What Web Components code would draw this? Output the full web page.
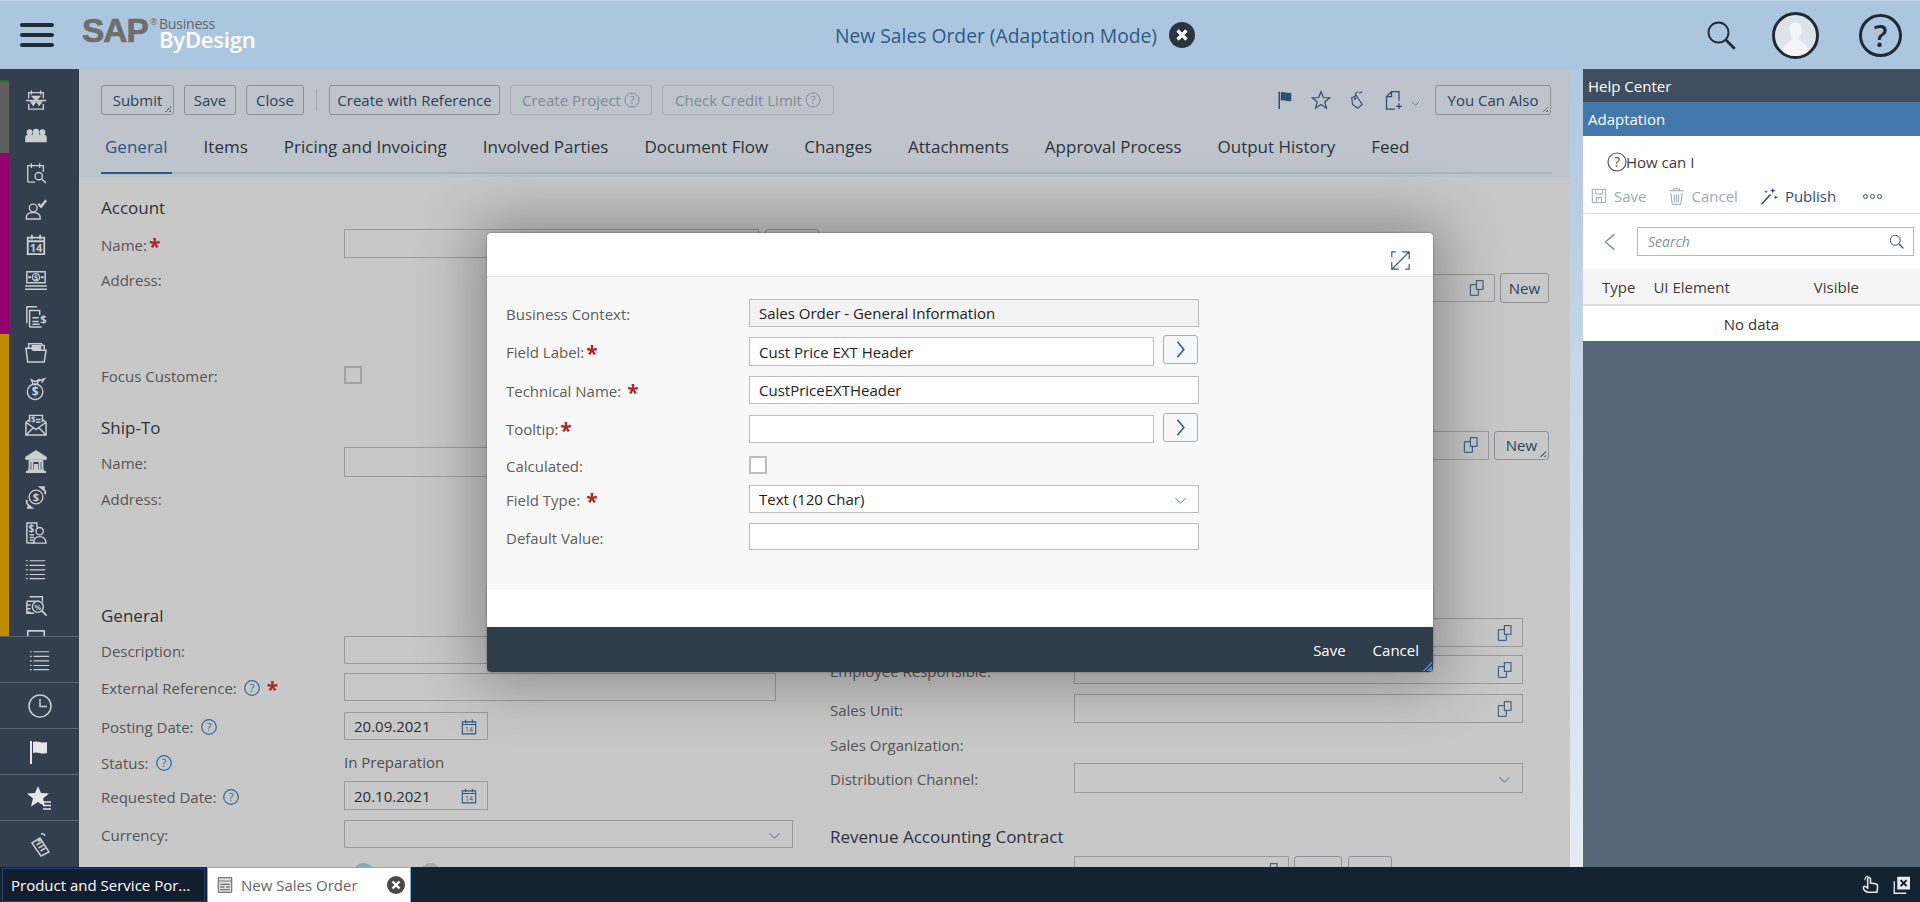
<!DOCTYPE html>
<html lang="en">
<head>
<meta charset="utf-8">
<title>New Sales Order</title>
<style>
  html, body { margin: 0; padding: 0; height: 100%; overflow: hidden; background: #c8c8c8; }
  body { font-family: "Open Sans", "Liberation Sans", sans-serif; }
</style>
</head>
<body>
<sap-shell>
  <app-header slot="header"></app-header>
  <side-nav slot="nav"></side-nav>
  <div slot="main">
    <page-toolbar></page-toolbar>
    <form-area>
      <form-col slot="left">
        <form-heading gap="19">Account</form-heading>
        <form-row gap="9" h="29" label="Name:" req><f-input w="415" h="29"></f-input><tool-btn w="54" h="29" style="margin-left:6px"></tool-btn></form-row>
        <form-row gap="6" h="30" label="Address:"></form-row>
        <form-row gap="66" h="29" label="Focus Customer:"><f-check></f-check></form-row>
        <form-heading gap="27">Ship-To</form-heading>
        <form-row gap="7" h="30" label="Name:"><f-input w="415" h="30"></f-input></form-row>
        <form-row gap="6" h="30" label="Address:"></form-row>
        <form-heading gap="91">General</form-heading>
        <form-row gap="8" h="28" label="Description:"><f-input w="432" h="28"></f-input></form-row>
        <form-row gap="9" h="28" label="External Reference:" help req><f-input w="432" h="28"></f-input></form-row>
        <form-row gap="11" h="28" label="Posting Date:" help><f-input w="144" h="28" value="20.09.2021" icon="cal"></f-input></form-row>
        <form-row gap="7" h="29" label="Status:" help><span style="color:#4d4d4d">In Preparation</span></form-row>
        <form-row gap="5" h="29" label="Requested Date:" help><f-input w="144" h="29" value="20.10.2021" icon="cal"></f-input></form-row>
        <form-row gap="10" h="28" label="Currency:"><f-input w="449" h="28" icon="chev"></f-input></form-row>
        <form-row gap="15" h="20" label=""><radio-dots></radio-dots></form-row>
      </form-col>
      <form-col slot="right">
        <form-row gap="96" h="30" label=""><f-input w="421" h="28" icon="copy"></f-input><tool-btn w="49" h="30" style="margin-left:5px">New</tool-btn></form-row>
        <form-row gap="127" h="30" label=""><f-input w="415" h="29" icon="copy"></f-input><tool-btn w="55" h="29" corner style="margin-left:5px">New</tool-btn></form-row>
        <form-row gap="158" h="29" label=""><f-input w="449" h="29" icon="copy"></f-input></form-row>
        <form-row gap="8" h="29" label="Employee Responsible:"><f-input w="449" h="29" icon="copy"></f-input></form-row>
        <form-row gap="10" h="29" label="Sales Unit:"><f-input w="449" h="29" icon="copy"></f-input></form-row>
        <form-row gap="7" h="28" label="Sales Organization:"></form-row>
        <form-row gap="5" h="30" label="Distribution Channel:"><f-input w="449" h="30" icon="chev"></f-input></form-row>
        <form-heading gap="32">Revenue Accounting Contract</form-heading>
        <form-row gap="7" h="30" label=""><f-input w="215" h="30" icon="copy"></f-input><tool-btn w="48" h="30" style="margin-left:5px"></tool-btn><tool-btn w="44" h="30" style="margin-left:6px"></tool-btn></form-row>
      </form-col>
    </form-area>
  </div>
  <div slot="gutter"></div>
  <help-panel slot="panel"></help-panel>
  <task-bar slot="taskbar"></task-bar>
  <adapt-dialog slot="overlay">
    <form-row gap="22" h="28" label="Business Context:"><f-input w="450" h="28" value="Sales Order - General Information" readonly></f-input></form-row>
    <form-row gap="8" h="31" label="Field Label:" req><f-input w="405" h="29" value="Cust Price EXT Header" style="align-self:flex-end"></f-input><arrow-btn></arrow-btn></form-row>
    <form-row gap="10" h="28" label="Technical Name:" req sp><f-input w="450" h="28" value="CustPriceEXTHeader"></f-input></form-row>
    <form-row gap="9" h="30" label="Tooltip:" req><f-input w="405" h="28" style="align-self:flex-end"></f-input><arrow-btn></arrow-btn></form-row>
    <form-row gap="8" h="28" label="Calculated:"><f-check></f-check></form-row>
    <form-row gap="6" h="28" label="Field Type:" req sp><f-input w="450" h="28" value="Text (120 Char)" icon="chev"></f-input></form-row>
    <form-row gap="10" h="27" label="Default Value:"><f-input w="450" h="27"></f-input></form-row>
  </adapt-dialog>
</sap-shell>

<script>
const ICONS = {
  menuCal: `<path d="M4 10V4h16v6M7 1.500v4.500M17 1.500v4.500M4 16v6h16v-6M1 12.500h22"/><path class="f" d="M6.500 14h5l-2.500 3.500zM13 14h5l-2.500 3.500z"/><path class="f" d="M8 8h8l-4 4z"/>`,
  team: `<g class="f"><circle cx="5" cy="8" r="2.500"/><circle cx="12" cy="7.500" r="2.700"/><circle cx="19" cy="8" r="2.500"/><path d="M1 18v-4.500q0-2.500 3.500-2.500 1.700 0 2.700.8V18zM8 18v-5.500q0-2.500 4-2.500t4 2.500V18zM17 18v-6.200q1-.8 2.500-.8 3.500 0 3.500 2.500V18z"/></g>`,
  calSearch: `<path d="M3 23V5h17v7M3 23h8M7 2.500v5M16 2.500v5"/><circle cx="15" cy="16.500" r="4"/><path d="M18 19.500l5 4.500"/>`,
  personCheck: `<circle cx="9" cy="12" r="4.200"/><path d="M1.500 24v-2q0-5 7.500-5t7.500 5v2z"/><path stroke-width="2.600" d="M14.500 7.500l3 3 5.500-7"/>`,
  cal14: `<path stroke-width="2" d="M3 5h18v18H3zM3 9h18M7.500 2v5M16.500 2v5"/><text x="12" y="21" text-anchor="middle" class="t" font-size="12" font-weight="700">14</text>`,
  money: `<path stroke-width="1.600" d="M2 3h20v12H2zM0 18.500h24M0 22h24"/><circle cx="12" cy="9" r="4"/><path stroke-width="2.400" d="M3.500 9h3M17.500 9h3"/><text x="12" y="12" text-anchor="middle" class="t" font-size="8" font-weight="700">$</text>`,
  docDollar: `<path stroke-width="1.600" d="M2 20V2h11M5 24V6h11v5M5 24h13M8 14h7M8 18h7M8 21h8"/><text x="20" y="20" text-anchor="middle" class="t" font-size="12" font-weight="700">$</text>`,
  folderMoney: `<path stroke-width="1.600" d="M4 9V3h14l1 2 2 0v5M1 8h6l2 2h14l-2 13H3z"/><path class="f" d="M8 5h9v4H8z"/>`,
  moneyBag: `<circle cx="11" cy="15" r="8.500"/><path stroke-width="1.600" d="M7 2l4 2 4-2-2 5H9zM15 3l6-2-3 4"/><text x="11" y="20" text-anchor="middle" class="t" font-size="13" font-weight="700">$</text>`,
  envelope: `<path stroke-width="1.600" d="M5 9V1.500h14V9M1 9l4-3M23 9l-4-3M1 9v14h22V9M1 9l11 8 11-8M1 23l8-8M23 23l-8-8"/><text x="9" y="10" text-anchor="middle" class="t" font-size="9" font-weight="700">$</text><path d="M12 6h5M12 9h5"/>`,
  bank: `<path class="f" d="M12 1L1 8v2h22V8z"/><path stroke-width="2" d="M3 22h18M1 24h22M4 12h16"/><path stroke-width="2.200" d="M5 13v8M8 13v8M16 13v8M19 13v8"/><path class="f" d="M10.500 16h3v5h-3z"/>`,
  coinArrows: `<circle cx="12" cy="12" r="7.500"/><text x="12" y="16.500" text-anchor="middle" class="t" font-size="12" font-weight="700">$</text><path stroke-width="2" d="M2 15q-1 5 4 8M22 9q1-5-4-7"/><path class="f" d="M4 21l4 3-5 0zM20 4l-4-3 5 0z"/>`,
  personDollar: `<path stroke-width="1.600" d="M2 23V1h11v5M2 23h9M5 14h5M5 17h5M5 20h4"/><text x="7" y="11" text-anchor="middle" class="t" font-size="11" font-weight="700">$</text><circle cx="16" cy="10" r="4"/><path d="M9.500 23q0-7 6.500-7t7 7z"/>`,
  list: `<path stroke-width="1.300" d="M5 3h17M5 8h17M5 13h17M5 18h17M5 22.500h17"/><path stroke-width="1.300" d="M1 3h2M1 8h2M1 13h2M1 18h2M1 22.500h2"/>`,
  coinSearch: `<path stroke-width="1.600" d="M2 8h14M2 8v13h8M5 3h14v6M2 12h4M2 16h4M2 20h4"/><circle cx="14" cy="14" r="6"/><path stroke-width="2" d="M18.500 18.500l5 5"/><text x="14" y="17" text-anchor="middle" class="t" font-size="8" font-weight="700">%</text>`,
  docClip: `<path stroke-width="1.800" d="M3 24V1h18v23M7 8h10"/>`,
  clock: `<circle cx="12" cy="12" r="11"/><path d="M12 5v7.500h7"/>`,
  flag: `<path class="f" stroke="none" d="M5 2c5-2 8 2 14 0v11c-6 2-9-2-14 0z"/><path stroke-width="2" d="M3 1v23"/>`,
  starList: `<path class="f" stroke="none" d="M10 0l3 7 8 .5-6 5 2 8-7-4.500-7 4.500 2-8-6-5 8-.5z"/><path d="M15 16h8M15 19.500h8M15 23h8"/>`,
  tag: `<path d="M4 11l8-5 9 14-8 4zM17 4q-1-3-4-2"/><circle cx="11" cy="8" r="1"/><path d="M8.500 13l5-3M10.500 16l5-3M12.500 19l5-3"/>`,
  star: `<path d="M12 2l2.800 7 7.700.4-6 4.900 2 7.500-6.500-4.300-6.500 4.300 2-7.500-6-4.900 7.700-.4z"/>`,
  tagOutline: `<path d="M5 9l6-3 8 12-6 5-7-5zM10 7Q9 2 14 1M15 3l4-2"/><circle cx="9.500" cy="10" r="1"/>`,
  docPlus: `<path d="M3 8l6-6h9v11M9 2v6H3v15h10M18 16v7M14.500 19.500h7"/>`,
  copy: `<rect x="11" y="1" width="10" height="13"/><path d="M11 7H2v16h12v-9"/>`,
  chevDown: `<path d="M3 8l9 9 9-9"/>`,
  chevRight: `<path stroke-width="2.200" d="M7 1l9 11-9 11"/>`,
  chevLeft: `<path stroke-width="2.200" d="M17 .5L3.500 12 17 23.500"/>`,
  search: `<circle cx="10" cy="10" r="8"/><path stroke-width="2.200" d="M16 16l7 7"/>`,
  expand: `<path d="M14 1h9v9M23 1L1 23M1 14v9h9M6 1H1v7M18 23h5v-7"/>`,
  save: `<path d="M2 2h20v20H2zM7 2v7h10V2M8 22v-8h8v8M10 16h2"/>`,
  trash: `<path d="M2 4h20M8 4V1h8v3M4 7l2 16h12l2-16M9 9v11M12 9v11M15 9v11"/>`,
  wand: `<path stroke-width="2.200" d="M2 23L14 10"/><path class="f" stroke="none" d="M17 1l1 3 3 1-3 1-1 3-1-3-3-1 3-1zM21 11l.8 2 2 .8-2 .8-.8 2-.8-2-2-.8 2-.8zM8 4l.7 1.700 1.700.7-1.700.7-.7 1.700-.7-1.700-1.700-.7 1.700-.7z"/>`,
  docLines: `<path class="f" fill-opacity=".25" d="M2 1h20v22H2z"/><path stroke-width="1.400" d="M2 1h20v22H2zM2 6h20"/><path stroke-width="2" d="M5 11h14M5 15h6M14 15h5M5 19h14"/>`,
  cal: `<path stroke-width="1.700" d="M2 5h20v18H2zM2 9h20M7 2v5M17 2v5"/><text x="12" y="20.500" text-anchor="middle" class="t" font-size="10.500" font-weight="400">14</text>`,
  hand: `<path stroke-width="2.200" d="M9 23c-3 0-7-3-7-6 0-2 1-3 3-2l3 2V4a2 2 0 014 0v6l7 1c2 .5 3 2 3 4 0 3-1 8-1 8z"/><path d="M4 6Q4 1 9 0" stroke-width="1.600"/>`,
  shrink: `<path stroke-width="1.800" d="M3 7v16h16"/><path class="f" stroke="none" d="M7 1h17v17H7z"/><path stroke="#152230" stroke-width="2.800" d="M11.500 5.500l8 8M19.500 5.500l-8 8"/>`
};

function icon(name, w, h) {
  return `<svg viewBox="0 0 24 24" width="${w}" height="${h || w}" aria-hidden="true">${ICONS[name]}</svg>`;
}
const ICON_CSS = `
  svg { display: block; fill: none; stroke: currentColor; stroke-width: 1.5; overflow: visible; flex: none; }
  svg .f { fill: currentColor; }
  svg .t { fill: currentColor; stroke: none; font-family: "Open Sans", sans-serif; }
`;

class Base extends HTMLElement {
  connectedCallback() {
    if (this.shadowRoot) return;
    this.attachShadow({ mode: "open" });
    this.shadowRoot.innerHTML = `<style>${ICON_CSS}${this.styles()}</style>${this.markup()}`;
  }
  styles() { return ""; }
  markup() { return "<slot></slot>"; }
}

class SapShell extends Base {
  styles() {
    return `
      :host { display: grid; position: relative; width: 1920px; height: 902px; overflow: hidden;
        grid-template-columns: 79px 1491px 13px 337px; grid-template-rows: 69px 798px 35px; }
      .head { grid-column: 1 / 5; }
      .nav, .main, .gutter, .panel { min-height: 0; overflow: hidden; }
      .main { background: #c8c8c8; }
      .gutter { background: linear-gradient(180deg, #b0c8e1 0%, #c9d9e8 45%, #e4ebf3 100%); }
      .bar { grid-column: 1 / 5; }
      ::slotted([slot=main]) { height: 100%; }
      ::slotted([slot=gutter]) { height: 100%; }
    `;
  }
  markup() {
    return `
      <div class="head"><slot name="header"></slot></div>
      <div class="nav"><slot name="nav"></slot></div>
      <div class="main"><slot name="main"></slot></div>
      <div class="gutter"><slot name="gutter"></slot></div>
      <div class="panel"><slot name="panel"></slot></div>
      <div class="bar"><slot name="taskbar"></slot></div>
      <slot name="overlay"></slot>
    `;
  }
}

class AppHeader extends Base {
  styles() {
    return `
      :host { display: flex; align-items: center; height: 69px; box-sizing: border-box; background: #adc6df; border-top: 1px solid #c5d6e6; color: #1f2a36; }
      .burger { display: flex; flex-direction: column; gap: 6px; margin-left: 20px; width: 34px; }
      .burger i { display: block; height: 4px; border-radius: 2px; background: #222c37; }
      .logo { display: flex; margin-left: 28px; height: 44px; align-items: flex-start; flex: none; width: 180px; }
      .sap { width: 66px; font: 700 33.500px/34px "Liberation Sans", sans-serif; letter-spacing: -1px; color: #6e6e6e; -webkit-text-stroke: .7px #6e6e6e; margin-top: 1px; white-space: nowrap; }
      .reg { width: 9px; margin-left: 2px; font: 400 9px/12px "Open Sans", sans-serif; color: #6b6f73; margin-top: 3px; }
      .brand { display: flex; flex-direction: column; }
      .biz { font: 400 14px/16px "Open Sans", sans-serif; color: #5f666d; letter-spacing: -.2px; margin-top: 3px; }
      .by { font: 600 22px/24px "Open Sans", sans-serif; color: #fff; letter-spacing: -.2px; margin-top: -5px; }
      .title { margin-left: 573px; font-size: 19.300px; color: #2e5a84; white-space: nowrap; }
      .close { margin-left: 12px; width: 26px; height: 26px; color: #2a3540; }
      .right { margin-left: auto; display: flex; align-items: center; margin-right: 18px; }
      .avatar { width: 47px; height: 47px; box-sizing: border-box; border: 3px solid #1f2a36; border-radius: 50%; background: #dde3ea; margin-left: 36px; overflow: hidden; }
      .help { width: 43px; height: 43px; box-sizing: border-box; border: 3px solid #1f2a36; border-radius: 50%; margin-left: 40px; text-align: center; font: 600 30px/37px "Open Sans", sans-serif; color: #1f2a36; }
    `;
  }
  markup() {
    return `
      <div class="burger"><i></i><i></i><i></i></div>
      <div class="logo">
        <span class="sap">SAP</span>
        <span class="reg">®</span>
        <div class="brand"><span class="biz">Business</span><span class="by">ByDesign</span></div>
      </div>
      <div class="title">New Sales Order (Adaptation Mode)</div>
      <div class="close"><svg viewBox="0 0 26 26" width="26" height="26"><circle cx="13" cy="13" r="13" fill="#2a3540" stroke="none"/><path d="M8.500 8.500l9 9M17.500 8.500l-9 9" stroke="#fff" stroke-width="3.200"/></svg></div>
      <div class="right">
        ${icon("search", 30)}
        <div class="avatar"><svg viewBox="0 0 40 40" width="41" height="41"><path fill="#f4f5f6" stroke="none" d="M20 7c-4 0-6 3-6 7 0 4 2 7 2.500 9 0 3-8 5-9 10l-1 7h27l-1-7c-1-5-9-7-9-10 .5-2 2.500-5 2.500-9 0-4-2-7-6-7z"/></svg></div>
        <div class="help">?</div>
      </div>
    `;
  }
}

class NavIcon extends Base {
  styles() {
    return `
      :host { display: flex; justify-content: center; align-items: center; height: var(--h, 36px); }
    `;
  }
  markup() { return icon(this.getAttribute("name"), this.getAttribute("size") || 24); }
}

class SideNav extends Base {
  styles() {
    return `
      :host { display: flex; flex-direction: column; height: 798px; background: #333f4e; color: #c9ced3; }
      .top { display: flex; height: 567px; flex: none; overflow: hidden; }
      .strip { width: 9px; flex: none; display: flex; flex-direction: column; padding-top: 11px; }
      .strip i { display: block; }
      .icons { flex: 1; padding: 13px 16px 0 0; }
      .icons nav-icon { --h: 36.070px; }
      .low { flex: 1; }
      .low nav-icon { --h: 45px; border-top: 1px solid #5d6875; }
    `;
  }
  markup() {
    const top = ["menuCal","team","calSearch","personCheck","cal14","money","docDollar","folderMoney","moneyBag","envelope","bank","coinArrows","personDollar","list","coinSearch","docClip"];
    return `
      <div class="top">
        <div class="strip">
          <i style="height:2px;background:#2c6b2c"></i>
          <i style="height:71px;background:#5f5f5f"></i>
          <i style="height:181px;background:#94006e"></i>
          <i style="height:302px;background:#bd8c00"></i>
        </div>
        <div class="icons">${top.map(n => `<nav-icon name="${n}" size="22"></nav-icon>`).join("")}</div>
      </div>
      <div class="low">
        <nav-icon name="list" size="22"></nav-icon>
        <nav-icon name="clock" size="24"></nav-icon>
        <nav-icon name="flag" size="24" style="color:#e4e6e8"></nav-icon>
        <nav-icon name="starList" size="24" style="color:#e4e6e8"></nav-icon>
        <nav-icon name="tag" size="24"></nav-icon>
      </div>
    `;
  }
}

class ToolBtn extends Base {
  styles() {
    const w = this.getAttribute("w");
    const h = this.getAttribute("h") || 30;
    return `
      :host { display: inline-flex; flex: none; align-items: center; justify-content: center; position: relative; box-sizing: border-box; height: ${h}px; ${w ? `width:${w}px;` : ""}
        border: 1px solid #8d9196; border-radius: 3px; font-size: 15px; color: #2f4256; white-space: nowrap; }
      :host([off]) { color: #7f8b97; border-color: #a9adb2; }
      .c { position: absolute; right: 2px; bottom: 2px; width: 6px; height: 6px; background: linear-gradient(135deg, transparent 50%, #6a6f75 50%, #6a6f75 65%, transparent 65%, transparent 80%, #6a6f75 80%); }
      .q { display: inline-block; width: 16px; height: 16px; margin-left: 3px; }
    `;
  }
  markup() {
    return `<slot></slot>${this.hasAttribute("q") ? `<span class="q"><svg viewBox="0 0 16 16" width="16" height="16"><circle cx="8" cy="8" r="7" stroke-width="1"/><text x="8" y="12" text-anchor="middle" class="t" font-size="11">?</text></svg></span>` : ""}${this.hasAttribute("corner") ? `<span class="c"></span>` : ""}`;
  }
}

class PageToolbar extends Base {
  styles() {
    return `
      :host { display: block; height: 108px; box-sizing: border-box; padding: 16px 19px 0 22px; background: #bdc4cc; }
      .row { display: flex; align-items: center; height: 30px; }
      .sep { width: 1px; height: 22px; background: #a3a8ae; margin: 0 12px; }
      .right { margin-left: auto; display: flex; align-items: center; color: #2f4f70; }
      .tabs { display: flex; gap: 28px; margin-top: 17px; height: 40px; border-bottom: 2px solid #a9b5c5; width: 1451px; font-size: 17px; color: #2d333a; }
      .tabs span { padding: 0 4px; height: 42px; line-height: 30px; box-sizing: border-box; white-space: nowrap; }
      .tabs .on { color: #2f5880; border-bottom: 2px solid #2f5880; }
    `;
  }
  markup() {
    const tabs = ["General","Items","Pricing and Invoicing","Involved Parties","Document Flow","Changes","Attachments","Approval Process","Output History","Feed"];
    return `
      <div class="row">
        <tool-btn w="73" corner>Submit</tool-btn>
        <tool-btn w="52" style="margin-left:10px">Save</tool-btn>
        <tool-btn w="58" style="margin-left:10px">Close</tool-btn>
        <span class="sep"></span>
        <tool-btn w="171">Create with Reference</tool-btn>
        <tool-btn w="142" off q style="margin-left:10px">Create Project</tool-btn>
        <tool-btn w="172" off q style="margin-left:10px">Check Credit Limit</tool-btn>
        <div class="right">
          <span style="margin-right:16px">${icon("flag", 18)}</span>
          <span style="margin-right:17px">${icon("star", 20)}</span>
          <span style="margin-right:18px">${icon("tagOutline", 18)}</span>
          <span>${icon("docPlus", 20)}</span>
          <span style="margin:6px 15px 0 7px">${icon("chevDown", 9)}</span>
          <tool-btn w="116" corner>You Can Also</tool-btn>
        </div>
      </div>
      <div class="tabs">${tabs.map((t, i) => `<span class="${i ? "" : "on"}">${t}</span>`).join("")}</div>
    `;
  }
}

class FormArea extends Base {
  styles() {
    return `
      :host { display: flex; height: 690px; overflow: hidden; padding-left: 22px; font-size: 15px; color: #555; }
      .l { width: 729px; flex: none; }
      .r { flex: 1; --label-w: 244px; }
    `;
  }
  markup() {
    return `<div class="l"><slot name="left"></slot></div><div class="r"><slot name="right"></slot></div>`;
  }
}

class FormCol extends Base {
  styles() { return `:host { display: block; }`; }
}

class FormHeading extends Base {
  styles() {
    return `:host { display: block; height: 24px; line-height: 24px; margin-top: ${this.getAttribute("gap") || 0}px; font-size: 17px; color: #2d333a; white-space: nowrap; }`;
  }
}

class FormRow extends Base {
  styles() {
    return `
      :host { display: flex; align-items: center; height: ${this.getAttribute("h") || 28}px; margin-top: ${this.getAttribute("gap") || 0}px; }
      .label { flex: none; width: var(--label-w, 243px); display: flex; align-items: center; white-space: nowrap; color: var(--label-color, #555); font-size: 15px; padding-top: 2px; box-sizing: border-box; }
      .h { margin-left: 7px; color: #2b6a9b; }
      .s { color: #a8282b; font: 700 21px/14px "Open Sans", sans-serif; height: 14px; margin-left: 2px; padding-top: 2px; }
      .s.sp { margin-left: 6px; }
      .h + .s { margin-left: 7px; }
      .body { display: flex; align-items: center; height: 100%; }
    `;
  }
  markup() {
    const help = this.hasAttribute("help")
      ? `<span class="h"><svg viewBox="0 0 16 16" width="16" height="16"><circle cx="8" cy="8" r="7.300" stroke-width="1.200"/><text x="8" y="12" text-anchor="middle" class="t" font-size="11">?</text></svg></span>` : "";
    const req = this.hasAttribute("req") ? `<span class="s ${this.hasAttribute("sp") ? "sp" : ""}">*</span>` : "";
    return `<div class="label"><span>${this.getAttribute("label") || ""}</span>${help}${req}</div><div class="body"><slot></slot></div>`;
  }
}

class FInput extends Base {
  styles() {
    return `
      :host { display: flex; flex: none; align-items: center; box-sizing: border-box; width: ${this.getAttribute("w")}px; height: ${this.getAttribute("h") || 28}px;
        padding: 0 9px; border: 1px solid var(--f-border, #9b9b9b); background: var(--f-bg, transparent); color: var(--f-color, #2b2f33); font-size: 15px; white-space: nowrap; }
      :host([readonly]) { background: #f2f2f2; }
      .v { flex: 1; min-width: 0; }
      .i { flex: none; color: var(--f-icon, #2f4f70); margin-right: -1px; }
      .i.cal { color: #2a5a85; margin-right: 1px; }
      .i.copy { margin-right: 0; }
      .i.chev { margin-right: 2px; margin-top: 2px; }
    `;
  }
  markup() {
    const name = this.getAttribute("icon");
    const map = { cal: ["cal", 16, 19], copy: ["copy", 16, 16], chev: ["chevDown", 13, 13] };
    const ic = name ? `<span class="i ${name}">${icon(map[name][0], map[name][1], map[name][2])}</span>` : "";
    return `<span class="v">${this.getAttribute("value") || ""}</span>${ic}`;
  }
}

class FCheck extends Base {
  styles() {
    return `:host { display: block; width: 18px; height: 18px; box-sizing: border-box; border: 2px solid var(--check, #a2a2a2); background: var(--f-bg, transparent); }`;
  }
  markup() { return ""; }
}

class RadioDots extends Base {
  styles() {
    return `
      :host { display: flex; gap: 46px; margin-left: 9px; height: 100%; }
      i { display: block; width: 21px; height: 21px; border-radius: 50%; }
    `;
  }
  markup() { return `<i style="background:#8fa4b4"></i><i style="background:#a9a9a9"></i>`; }
}

class ArrowBtn extends Base {
  styles() {
    return `
      :host { display: flex; align-items: center; justify-content: center; align-self: flex-start; box-sizing: border-box; width: 35px; height: 29px; margin-left: 9px; border: 1px solid #a9aeb3; border-radius: 3px; background: #f6f7f8; color: #2b5a88; }
    `;
  }
  markup() { return icon("chevRight", 18, 17); }
}

class AdaptDialog extends Base {
  styles() {
    return `
      :host { position: absolute; left: 487px; top: 233px; width: 946px; height: 439px; display: flex; flex-direction: column; border-radius: 4px; background: #fff;
        box-shadow: 0 0 60px 12px rgba(0,0,0,.3), 0 0 2px rgba(0,0,0,.5); font-size: 15px; --label-w: 243px; --label-color: #5d5d5d; --f-bg: #fff; --f-border: #bdbdbd; --f-color: #222; --check: #bdbdbd; }
      .head { height: 44px; box-sizing: border-box; border-bottom: 1px solid #e8e8e8; display: flex; justify-content: flex-end; align-items: center; padding: 12px 23px 0 0; color: #2f5b85; border-radius: 4px 4px 0 0; }
      .body { height: 313px; box-sizing: border-box; background: #f8f8f8; padding-left: 19px; }
      .gap { height: 37px; }
      .foot { height: 45px; background: #2f3c4a; color: #fff; display: flex; justify-content: flex-end; align-items: center; gap: 27px; padding-right: 14px; border-radius: 0 0 4px 4px; position: relative; }
      .grip { position: absolute; right: 1px; bottom: 1px; width: 9px; height: 9px; background: linear-gradient(135deg, transparent 45%, #4f86bd 45%, #4f86bd 60%, transparent 60%, transparent 72%, #4f86bd 72%); }
    `;
  }
  markup() {
    return `
      <div class="head">${icon("expand", 19)}</div>
      <div class="body"><slot></slot></div>
      <div class="gap"></div>
      <div class="foot"><span>Save</span><span>Cancel</span><i class="grip"></i></div>
    `;
  }
}

class HelpPanel extends Base {
  styles() {
    return `
      :host { display: flex; flex-direction: column; height: 798px; background: #556779; font-size: 15px; color: #333; }
      .t1, .t2 { display: flex; align-items: center; padding-left: 5px; color: #fff; font-weight: 500; font-size: 15px; }
      .t1 { height: 33px; background: #3f4f60; }
      .t2 { height: 34px; background: #4278ac; }
      .white { background: #fff; height: 205px; }
      .how { height: 43px; box-sizing: border-box; padding: 8px 0 0 24px; display: flex; align-items: center; color: #3c3c3c; }
      .how svg { margin-right: -1px; }
      .act { height: 35px; box-sizing: border-box; border-bottom: 1px solid #ddd; display: flex; align-items: center; padding-left: 8px; color: #2f4f70; }
      .act .off { color: #9ba8b4; }
      .act span { display: flex; align-items: center; gap: 7px; }
      .find { height: 55px; display: flex; align-items: center; padding-left: 20px; }
      .box { margin-left: 18px; width: 277px; height: 29px; box-sizing: border-box; border: 1px solid #b4b9bf; display: flex; align-items: center; padding: 0 9px 0 10px; color: #8a8f95; font-style: italic; font-size: 14px; }
      .box b { flex: 1; font-weight: 400; }
      .cols { height: 37px; box-sizing: border-box; background: #f5f5f5; border-bottom: 2px solid #dedede; display: flex; align-items: center; color: #3c3c3c; }
      .none { height: 35px; display: flex; align-items: center; justify-content: center; color: #333; }
    `;
  }
  markup() {
    return `
      <div class="t1">Help Center</div>
      <div class="t2">Adaptation</div>
      <div class="white">
        <div class="how"><svg viewBox="0 0 20 20" width="20" height="20" style="stroke:#555"><circle cx="10" cy="10" r="9" stroke-width="1.200"/><text x="10" y="15" text-anchor="middle" class="t" font-size="14" style="fill:#555">?</text></svg><span>How can I</span></div>
        <div class="act">
          <span class="off" style="gap:7px">${icon("save", 16)}Save</span>
          <span class="off" style="margin-left:22px;gap:6px">${icon("trash", 17)}Cancel</span>
          <span style="margin-left:22px">${icon("wand", 18)}Publish</span>
          <span style="margin-left:27px;gap:2px">${"<i style='width:5px;height:5px;box-sizing:border-box;border:1px solid #2f4f70;border-radius:50%;display:block'></i>".repeat(3)}</span>
        </div>
        <div class="find">
          <span style="color:#7d93a8">${icon("chevLeft", 16)}</span>
          <div class="box"><b>Search</b><span style="color:#2f4f70">${icon("search", 15)}</span></div>
        </div>
        <div class="cols"><span style="margin-left:19px">Type</span><span style="margin-left:18px">UI Element</span><span style="margin-left:84px">Visible</span></div>
        <div class="none">No data</div>
      </div>
    `;
  }
}

class TaskBar extends Base {
  styles() {
    return `
      :host { display: flex; height: 35px; background: #152230; font-size: 15px; align-items: stretch; }
      .a { margin: 1px 0 0 2px; width: 203px; box-sizing: border-box; border: 1px solid #24406f; background: #121e2e; color: #fff; font-weight: 500; padding-left: 8px; display: flex; align-items: center; white-space: nowrap; overflow: hidden; }
      .b { margin-left: 2px; width: 204px; box-sizing: border-box; background: #fff; border-top: 1px solid #6fb1dd; border-left: 1px solid #6fb1dd; border-right: 1px solid #6fb1dd; display: flex; align-items: center; color: #666; padding-left: 9px; }
      .b span { margin-left: 8px; width: 146px; white-space: nowrap; }
      .r { margin-left: auto; display: flex; align-items: center; gap: 13px; padding-right: 10px; color: #e6eaef; }
    `;
  }
  markup() {
    return `
      <div class="a">Product and Service Por...</div>
      <div class="b"><span style="margin:0;width:16px;color:#777">${icon("docLines", 16, 18)}</span><span>New Sales Order</span>
        <svg viewBox="0 0 18 18" width="18" height="18"><circle cx="9" cy="9" r="9" fill="#4a4a4a" stroke="none"/><path d="M5.500 5.500l7 7M12.500 5.500l-7 7" stroke="#fff" stroke-width="2.400"/></svg>
      </div>
      <div class="r">${icon("hand", 17)}${icon("shrink", 18)}</div>
    `;
  }
}

customElements.define("sap-shell", SapShell);
customElements.define("app-header", AppHeader);
customElements.define("nav-icon", NavIcon);
customElements.define("side-nav", SideNav);
customElements.define("tool-btn", ToolBtn);
customElements.define("page-toolbar", PageToolbar);
customElements.define("form-area", FormArea);
customElements.define("form-col", FormCol);
customElements.define("form-heading", FormHeading);
customElements.define("form-row", FormRow);
customElements.define("f-input", FInput);
customElements.define("f-check", FCheck);
customElements.define("radio-dots", RadioDots);
customElements.define("arrow-btn", ArrowBtn);
customElements.define("adapt-dialog", AdaptDialog);
customElements.define("help-panel", HelpPanel);
customElements.define("task-bar", TaskBar);
</script>
</body>
</html>
